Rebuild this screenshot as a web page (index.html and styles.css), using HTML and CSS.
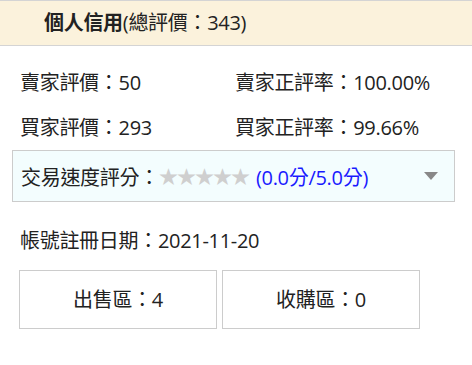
FILE: index.html
```html
<!DOCTYPE html>
<html lang="zh-Hant">
<head>
    <meta charset="UTF-8">
    <title>個人信用</title>
    <link rel="stylesheet" href="styles.css">
</head>
<body>
    <div class="credit-title">
        <b>個人信用</b>(總評價：343)
    </div>
    <div class="credit-body">
        <div class="stat-grid">
            <div>賣家評價：50</div>
            <div>賣家正評率：100.00%</div>
            <div>買家評價：293</div>
            <div>買家正評率：99.66%</div>
        </div>
        <div class="speed-box">
            <span>交易速度評分：</span>
            <span class="stars">★★★★★</span>
            <span class="score">(0.0分/5.0分)</span>
            <span class="arrow"></span>
        </div>
        <div class="reg-date">帳號註冊日期：2021-11-20</div>
        <div class="zone-list">
            <div class="zone">出售區：4</div>
            <div class="zone">收購區：0</div>
        </div>
    </div>
</body>
</html>
```

FILE: styles.css
```css
html, body {
    margin: 0;
    padding: 0;
}
body {
    font-family: 'Open Sans', 'Noto Sans CJK TC', sans-serif;
    font-size: 20px;
    letter-spacing: -0.3px;
    color: #222;
    background-color: #fff;
}
.credit-title {
    height: 44px;
    line-height: 44px;
    padding-left: 44px;
    background-color: #fbf2dc;
    border-top: 1px solid #d4d4d4;
    border-bottom: 1px solid #d4d4d4;
}
.credit-title b {
    font-weight: bold;
}
.credit-body {
    padding: 14px 0 0 20px;
}
.stat-grid {
    display: grid;
    grid-template-columns: 215px auto;
}
.stat-grid div {
    height: 45px;
    line-height: 45px;
}
.speed-box {
    display: flex;
    align-items: center;
    width: 433px;
    height: 50px;
    margin-left: -8px;
    padding-left: 8px;
    border: 1px solid #cccccc;
    background-color: #f3fdfe;
}
.stars {
    color: #cfcfcf;
    font-size: 19px;
    letter-spacing: -1px;
    margin-right: 7px;
}
.score {
    color: #1a1aff;
}
.arrow {
    margin-left: auto;
    margin-right: 16px;
    width: 0;
    height: 0;
    border-left: 7px solid transparent;
    border-right: 7px solid transparent;
    border-top: 8px solid #888;
}
.reg-date {
    height: 45px;
    line-height: 45px;
    margin-top: 16px;
}
.zone-list {
    display: flex;
    gap: 5px;
    margin: 7px 0 0 -1px;
}
.zone {
    width: 196px;
    height: 57px;
    line-height: 57px;
    text-align: center;
    border: 1px solid #cccccc;
}
```
